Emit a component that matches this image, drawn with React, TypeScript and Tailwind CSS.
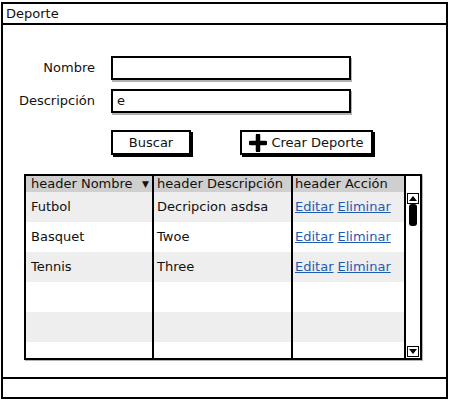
import React from "react";

const rows = [
  { nombre: "Futbol", desc: "Decripcion asdsa", acc: true },
  { nombre: "Basquet", desc: "Twoe", acc: true },
  { nombre: "Tennis", desc: "Three", acc: true },
  { nombre: "", desc: "", acc: false },
  { nombre: "", desc: "", acc: false },
  { nombre: "", desc: "", acc: false },
];

const App = () => {
  return (
    <div className="w-[450px] h-[400px] bg-white pt-[2px] pl-[1px] text-[13px] text-[#111]" style={{ fontFamily: '"DejaVu Sans", sans-serif' }}>
      <div className="flex flex-col w-[447px] h-[397px] border-2 border-black">
        <div className="h-[21px] border-b-2 border-black px-[3px] leading-[20px]">Deporte</div>

        <div className="flex-1 flex flex-col pt-[31px]">
          <div className="flex items-center">
            <p className="w-[92px] text-right">Nombre</p>
            <div className="ml-[16px] w-[240px] h-[24px] border-2 border-black shadow-[1px_2px_0_rgba(0,0,0,0.3)]"></div>
          </div>
          <div className="flex items-center mt-[9px]">
            <p className="w-[92px] text-right">Descripción</p>
            <div className="ml-[16px] w-[240px] h-[24px] border-2 border-black shadow-[1px_2px_0_rgba(0,0,0,0.3)] px-[4px] leading-[20px]">e</div>
          </div>

          <div className="flex mt-[17px] ml-[108px]">
            <button className="w-[80px] h-[25px] border-2 border-black shadow-[2px_2px_0_#000] leading-[20px]">Buscar</button>
            <button className="ml-[49px] w-[133px] h-[25px] border-2 border-black shadow-[2px_2px_0_#000] flex items-center justify-center gap-[4px]">
              <svg width="18" height="18" viewBox="0 0 18 18">
                <path d="M9 1.5V16.5M1.5 9H16.5" stroke="#000" strokeWidth="4.5" strokeLinecap="round" />
              </svg>
              <span>Crear Deporte</span>
            </button>
          </div>

          <div className="mt-[19px] ml-[21px] w-[398px] h-[186px] border-2 border-black shadow-[1px_1px_0_rgba(0,0,0,0.3)] flex overflow-hidden">
            <div className="flex-1 flex flex-col">
              <div className="flex h-[16px] bg-[#cfcfcf] leading-[16px]">
                <div className="w-[128px] border-r-2 border-black pl-[5px] flex justify-between pr-[3px]">
                  <span>header Nombre</span>
                  <span className="text-[9px]">▼</span>
                </div>
                <div className="w-[139px] border-r-2 border-black pl-[3px]">header Descripción</div>
                <div className="flex-1 pl-[2px]">header Acción</div>
              </div>
              {rows.map((r, i) => (
                <div key={i} className={`flex ${i === 5 ? "h-[16px]" : "h-[30px]"} items-center ${i % 2 === 0 ? "bg-[#eeeeee]" : "bg-white"}`}>
                  <div className="w-[128px] h-full border-r-2 border-black pl-[5px] flex items-center">{r.nombre}</div>
                  <div className="w-[139px] h-full border-r-2 border-black pl-[3px] flex items-center">{r.desc}</div>
                  <div className="flex-1 h-full pl-[2px] flex items-center gap-[4px] text-[#1f5bb0]">
                    {r.acc && (
                      <>
                        <span className="underline">Editar</span>
                        <span className="underline">Eliminar</span>
                      </>
                    )}
                  </div>
                </div>
              ))}
            </div>
            <div className="w-[16px] bg-white border-l-2 border-black flex flex-col items-center pt-[17px] pb-[1px]">
              <div className="w-[12px] h-[11px] border border-black flex items-center justify-center">
                <svg width="8" height="5" viewBox="0 0 8 5"><path d="M0 5L4 0L8 5Z" fill="#000" /></svg>
              </div>
              <div className="w-[8px] h-[22px] bg-black rounded-[3px]"></div>
              <div className="flex-1"></div>
              <div className="w-[12px] h-[11px] border border-black flex items-center justify-center">
                <svg width="8" height="5" viewBox="0 0 8 5"><path d="M0 0L8 0L4 5Z" fill="#000" /></svg>
              </div>
            </div>
          </div>
        </div>

        <div className="h-[20px] border-t-2 border-black"></div>
      </div>
    </div>
  );
};

export default App;
